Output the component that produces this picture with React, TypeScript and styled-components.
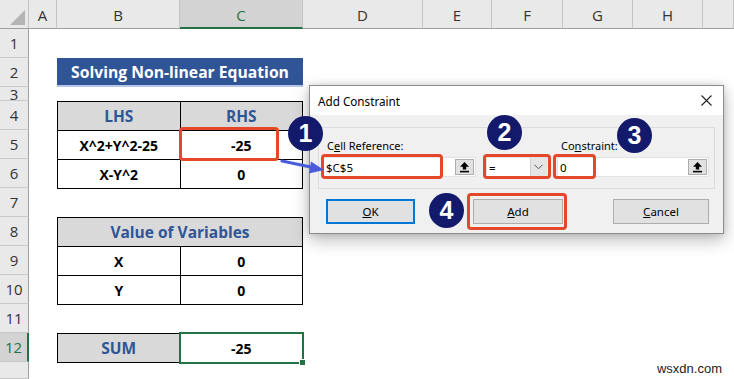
import styled, { createGlobalStyle } from 'styled-components';

const GlobalStyle = createGlobalStyle`
  html, body {
    margin: 0;
    padding: 0;
    background: #fff;
  }
  body {
    overflow: hidden;
  }
`;

const COLUMNS = ['A', 'B', 'C', 'D', 'E', 'F', 'G', 'H', ''];
const ROWS = [1, 2, 3, 4, 5, 6, 7, 8, 9, 10, 11, 12, ''];
const GREEN = '#217346';
const RED = '#e5472b';
const NAVY = '#131a6c';

const UpIcon = () => (
  <svg width="11" height="12" viewBox="0 0 11 12">
    <path d="M5.5 1 L10 5.8 H7.2 V8.6 H3.8 V5.8 H1 Z" fill="#000" />
    <rect x="1" y="9.8" width="9" height="1.6" fill="#000" />
  </svg>
);

function App() {
  return (
    <>
      <GlobalStyle />
      <Sheet>
        <Corner />
        {COLUMNS.map((c) => (
          <ColHeader key={`col-${c}`} $active={c === 'C'}>
            {c}
          </ColHeader>
        ))}
        {ROWS.map((r, idx) => (
          <RowHeader key={`row-${idx}`} $row={idx + 2} $active={r === 12}>
            {r}
          </RowHeader>
        ))}

        <Title>Solving Non-linear Equation</Title>

        <Table $row={5} $rows={3}>
          <Cell $head>LHS</Cell>
          <Cell $head>RHS</Cell>
          <Cell>X^2+Y^2-25</Cell>
          <Cell>-25</Cell>
          <Cell>X-Y^2</Cell>
          <Cell>0</Cell>
        </Table>

        <Table $row={9} $rows={3}>
          <Cell $head $wide>Value of Variables</Cell>
          <Cell>X</Cell>
          <Cell>0</Cell>
          <Cell>Y</Cell>
          <Cell>0</Cell>
        </Table>

        <Table $row={13} $rows={1}>
          <Cell $head>SUM</Cell>
          <Cell $selected>-25</Cell>
        </Table>

        <Dialog>
          <TitleBar>
            <span>Add Constraint</span>
            <svg width="11" height="11" viewBox="0 0 11 11">
              <path d="M0.5 0.5 L10.5 10.5 M10.5 0.5 L0.5 10.5" stroke="#222" strokeWidth="1.1" />
            </svg>
          </TitleBar>
          <DialogBody>
            <GroupBox>
              <FieldLabel>
                C<u>e</u>ll Reference:
              </FieldLabel>
              <span />
              <FieldLabel>
                Co<u>n</u>straint:
              </FieldLabel>
              <Field>
                <FieldText>$C$5</FieldText>
                <RefButton>
                  <UpIcon />
                </RefButton>
              </Field>
              <Field>
                <FieldText>=</FieldText>
                <DropButton>
                  <svg width="9" height="6" viewBox="0 0 9 6">
                    <path d="M0.5 0.8 L4.5 4.8 L8.5 0.8" stroke="#555" strokeWidth="1" fill="none" />
                  </svg>
                </DropButton>
              </Field>
              <Field>
                <FieldText>0</FieldText>
                <RefButton>
                  <UpIcon />
                </RefButton>
              </Field>
            </GroupBox>
            <ButtonRow>
              <DialogButton $width={89} $default>
                <u>O</u>K
              </DialogButton>
              <DialogButton $width={90} $offset={58}>
                <u>A</u>dd
              </DialogButton>
              <DialogButton $width={96} $offset={50}>
                <u>C</u>ancel
              </DialogButton>
            </ButtonRow>
          </DialogBody>
        </Dialog>

        <Highlight style={{ left: 179, top: 127, width: 100, height: 34 }} />
        <Highlight style={{ left: 321, top: 154, width: 122, height: 25 }} />
        <Highlight style={{ left: 483, top: 154, width: 68, height: 25 }} />
        <Highlight style={{ left: 553, top: 154, width: 43, height: 25 }} />
        <Highlight style={{ left: 467, top: 193, width: 100, height: 37 }} />

        <Arrow width="48" height="22" viewBox="0 0 48 22">
          <path d="M3 5 L34 11.5" stroke="#4a5cdb" strokeWidth="3.2" strokeLinecap="round" />
          <path d="M32 5.5 L45 14 L30 17.5 Z" fill="#4a5cdb" />
        </Arrow>

        <Badge style={{ left: 288, top: 116 }}>1</Badge>
        <Badge style={{ left: 487, top: 115 }}>2</Badge>
        <Badge style={{ left: 617, top: 118 }}>3</Badge>
        <Badge style={{ left: 429, top: 193 }}>4</Badge>

        <Watermark>wsxdn.com</Watermark>
      </Sheet>
    </>
  );
}

export default App;

const Sheet = styled.div`
  position: relative;
  width: 734px;
  height: 379px;
  overflow: hidden;
  display: grid;
  grid-template-columns: 29px 28px 123px 123px 120px 69px 71px 70px 70px 1fr;
  grid-template-rows: 29px 29px 29px 14px 29px 29px 29px 29px 29px 29px 29px 29px 29px 1fr;
  background: #fff;
  font-family: 'Open Sans', 'Noto Sans', sans-serif;
`;

const Corner = styled.div`
  grid-row: 1;
  grid-column: 1;
  position: relative;
  background: #e9e9e9;
  border-right: 1px solid #c4c4c4;
  border-bottom: 1px solid #9e9e9e;

  &::after {
    content: '';
    position: absolute;
    right: 3px;
    bottom: 3px;
    border-left: 15px solid transparent;
    border-bottom: 15px solid #b4b4b4;
  }
`;

const ColHeader = styled.div<{ $active?: boolean }>`
  grid-row: 1;
  display: flex;
  align-items: center;
  justify-content: center;
  background: ${({ $active }) => ($active ? '#d3d3d3' : '#e9e9e9')};
  color: ${({ $active }) => ($active ? GREEN : '#333')};
  border-right: 1px solid #c4c4c4;
  border-bottom: ${({ $active }) => ($active ? `2px solid ${GREEN}` : '1px solid #9e9e9e')};
  font-size: 15px;
  padding-top: 2px;
  box-sizing: border-box;
`;

const RowHeader = styled.div<{ $row: number; $active?: boolean }>`
  grid-row: ${({ $row }) => $row};
  grid-column: 1;
  display: flex;
  align-items: center;
  justify-content: center;
  overflow: hidden;
  background: ${({ $active }) => ($active ? '#d3d3d3' : '#e9e9e9')};
  color: ${({ $active }) => ($active ? GREEN : '#333')};
  border-bottom: 1px solid #c8c8c8;
  border-right: ${({ $active }) => ($active ? `2px solid ${GREEN}` : '1px solid #9e9e9e')};
  font-size: 15px;
  line-height: 14px;
  box-sizing: border-box;
`;

const Title = styled.div`
  grid-row: 3;
  grid-column: 3 / span 2;
  display: flex;
  align-items: center;
  justify-content: center;
  background: #2f5597;
  border-bottom: 2px solid #b4c7e7;
  color: #fff;
  font-weight: 700;
  font-size: 15.7px;
`;

const Table = styled.div<{ $row: number; $rows: number }>`
  grid-row: ${({ $row, $rows }) => `${$row} / span ${$rows}`};
  grid-column: 3 / span 2;
  display: grid;
  grid-template-columns: 1fr 1fr;
  grid-auto-rows: 1fr;
  gap: 1px;
  background: #000;
  border: 1px solid #000;
  height: calc(100% + 1px);
  box-sizing: border-box;
`;

const Cell = styled.div<{ $head?: boolean; $wide?: boolean; $selected?: boolean }>`
  position: relative;
  display: flex;
  align-items: center;
  justify-content: center;
  grid-column: ${({ $wide }) => ($wide ? 'span 2' : 'auto')};
  background: ${({ $head }) => ($head ? '#d9d9d9' : '#fff')};
  color: ${({ $head }) => ($head ? '#2f5597' : '#000')};
  font-weight: 700;
  font-size: ${({ $head }) => ($head ? '15.5px' : '14px')};

  ${({ $selected }) =>
    $selected &&
    `
    &::before {
      content: '';
      position: absolute;
      inset: -2px -2px -2px -2px;
      border: 2px solid ${GREEN};
    }
    &::after {
      content: '';
      position: absolute;
      right: -4px;
      bottom: -4px;
      width: 5px;
      height: 5px;
      background: ${GREEN};
      border: 1px solid #fff;
    }
  `}
`;

const Dialog = styled.div`
  position: absolute;
  left: 309px;
  top: 85px;
  width: 415px;
  height: 149px;
  box-sizing: border-box;
  display: flex;
  flex-direction: column;
  background: #f0f0f0;
  border: 1px solid #8c8c8c;
  box-shadow: 0 6px 16px rgba(0, 0, 0, 0.28), 0 0 6px rgba(0, 0, 0, 0.12);
  font-family: 'Noto Sans', 'Open Sans', sans-serif;
  font-size: 11px;
  color: #000;
  z-index: 2;
`;

const TitleBar = styled.div`
  height: 29px;
  display: flex;
  align-items: center;
  justify-content: space-between;
  padding: 0 11px 0 8px;
  background: #fff;
  font-size: 11.7px;
`;

const DialogBody = styled.div`
  flex: 1;
  display: flex;
  flex-direction: column;
  padding: 12px 8px 0 8px;
`;

const GroupBox = styled.div`
  height: 62px;
  box-sizing: border-box;
  border: 1px solid #dcdcdc;
  display: grid;
  grid-template-columns: 153px 61px 152px;
  grid-template-rows: 29px 20px;
  column-gap: 10px;
  padding: 0 0 0 4px;
  align-items: end;
`;

const FieldLabel = styled.div`
  padding: 0 0 4px 4px;
  font-size: 11px;
  line-height: 14px;
`;

const Field = styled.div`
  height: 20px;
  display: flex;
  align-items: stretch;
  background: #fff;
  border: 1px solid #e2e2e2;
  box-sizing: border-box;
`;

const FieldText = styled.div`
  flex: 1;
  display: flex;
  align-items: center;
  padding-left: 2px;
  font-size: 11.5px;
`;

const RefButton = styled.div`
  width: 17px;
  display: flex;
  align-items: center;
  justify-content: center;
  background: #e1e1e1;
  border: 1px solid #adadad;
  margin: 1px;
`;

const DropButton = styled.div`
  width: 15px;
  display: flex;
  align-items: center;
  justify-content: center;
  background: #e5e5e5;
  border-left: 1px solid #cfcfcf;
`;

const ButtonRow = styled.div`
  display: flex;
  padding: 10px 0 0 8px;
`;

const DialogButton = styled.div<{ $width: number; $offset?: number; $default?: boolean }>`
  width: ${({ $width }) => $width}px;
  height: 25px;
  margin-left: ${({ $offset }) => $offset || 0}px;
  box-sizing: border-box;
  display: flex;
  align-items: center;
  justify-content: center;
  background: #e1e1e1;
  border: ${({ $default }) => ($default ? '2px solid #0078d7' : '1px solid #adadad')};
  font-size: 11.5px;
`;

const Highlight = styled.div`
  position: absolute;
  box-sizing: border-box;
  border: 3px solid ${RED};
  border-radius: 4px;
  z-index: 3;
`;

const Arrow = styled.svg`
  position: absolute;
  left: 279px;
  top: 156px;
  z-index: 3;
`;

const Badge = styled.div`
  position: absolute;
  width: 35px;
  height: 35px;
  border-radius: 50%;
  background: ${NAVY};
  display: flex;
  align-items: center;
  justify-content: center;
  color: #fff;
  font-family: 'Liberation Sans', Arial, sans-serif;
  font-weight: 700;
  font-size: 25px;
  z-index: 4;
`;

const Watermark = styled.div`
  position: absolute;
  right: 12px;
  bottom: 3px;
  font-family: 'Liberation Sans', Arial, sans-serif;
  font-size: 13px;
  color: #222;
  z-index: 1;
`;
